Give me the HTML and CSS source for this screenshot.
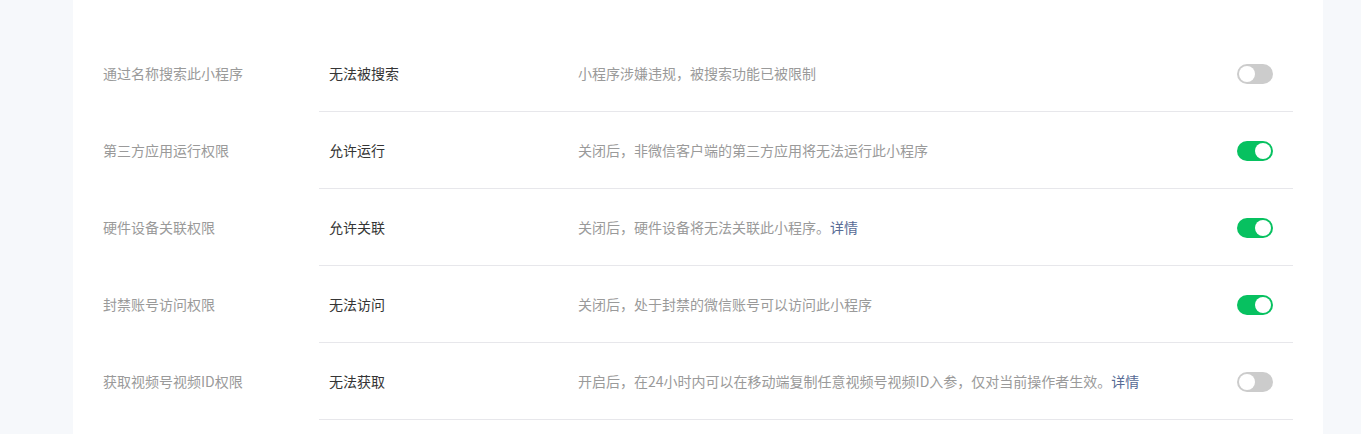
FILE: index.html
```html
<!DOCTYPE html>
<html lang="zh-CN">
<head>
<meta charset="utf-8">
<link rel="stylesheet" href="styles.css">
</head>
<body>
<div class="page">
  <div class="card">
    <div class="row">
      <div class="label">通过名称搜索此小程序</div>
      <div class="content">
        <div class="value">无法被搜索</div>
        <div class="desc">小程序涉嫌违规，被搜索功能已被限制</div>
        <div class="switch"><span class="knob"></span></div>
      </div>
    </div>
    <div class="row">
      <div class="label">第三方应用运行权限</div>
      <div class="content">
        <div class="value">允许运行</div>
        <div class="desc">关闭后，非微信客户端的第三方应用将无法运行此小程序</div>
        <div class="switch on"><span class="knob"></span></div>
      </div>
    </div>
    <div class="row">
      <div class="label">硬件设备关联权限</div>
      <div class="content">
        <div class="value">允许关联</div>
        <div class="desc">关闭后，硬件设备将无法关联此小程序。<a class="link">详情</a></div>
        <div class="switch on"><span class="knob"></span></div>
      </div>
    </div>
    <div class="row">
      <div class="label">封禁账号访问权限</div>
      <div class="content">
        <div class="value">无法访问</div>
        <div class="desc">关闭后，处于封禁的微信账号可以访问此小程序</div>
        <div class="switch on"><span class="knob"></span></div>
      </div>
    </div>
    <div class="row">
      <div class="label">获取视频号视频ID权限</div>
      <div class="content">
        <div class="value">无法获取</div>
        <div class="desc">开启后，在24小时内可以在移动端复制任意视频号视频ID入参，仅对当前操作者生效。<a class="link">详情</a></div>
        <div class="switch"><span class="knob"></span></div>
      </div>
    </div>
  </div>
</div>
</body>
</html>
```
FILE: styles.css
```css
html, body {
  margin: 0;
  padding: 0;
  background: #f6f8fb;
  font-family: "Noto Sans CJK SC", "Noto Sans", sans-serif;
  font-size: 14px;
}
.page {
  padding-left: 73px;
  width: 1250px;
}
.card {
  background: #ffffff;
  padding: 35px 30px 14px 30px;
}
.row {
  display: flex;
  height: 77px;
}
.label {
  width: 216px;
  flex: none;
  color: #9a9a9a;
  display: flex;
  align-items: center;
  padding-bottom: 1px;
}
.content {
  flex: 1;
  display: flex;
  align-items: center;
  border-bottom: 1px solid #e7e7eb;
  padding: 0 20px 0 10px;
}
.value {
  width: 249px;
  flex: none;
  color: #353535;
}
.desc {
  flex: 1;
  color: #9a9a9a;
}
.link {
  color: #576b95;
  cursor: pointer;
}
.switch {
  width: 36px;
  height: 20px;
  margin-top: 2px;
  border-radius: 10px;
  background: #cccccc;
  position: relative;
  flex: none;
}
.switch .knob {
  position: absolute;
  top: 2px;
  left: 2px;
  width: 16px;
  height: 16px;
  border-radius: 50%;
  background: #ffffff;
}
.switch.on {
  background: #07c160;
}
.switch.on .knob {
  left: 18px;
}
```
